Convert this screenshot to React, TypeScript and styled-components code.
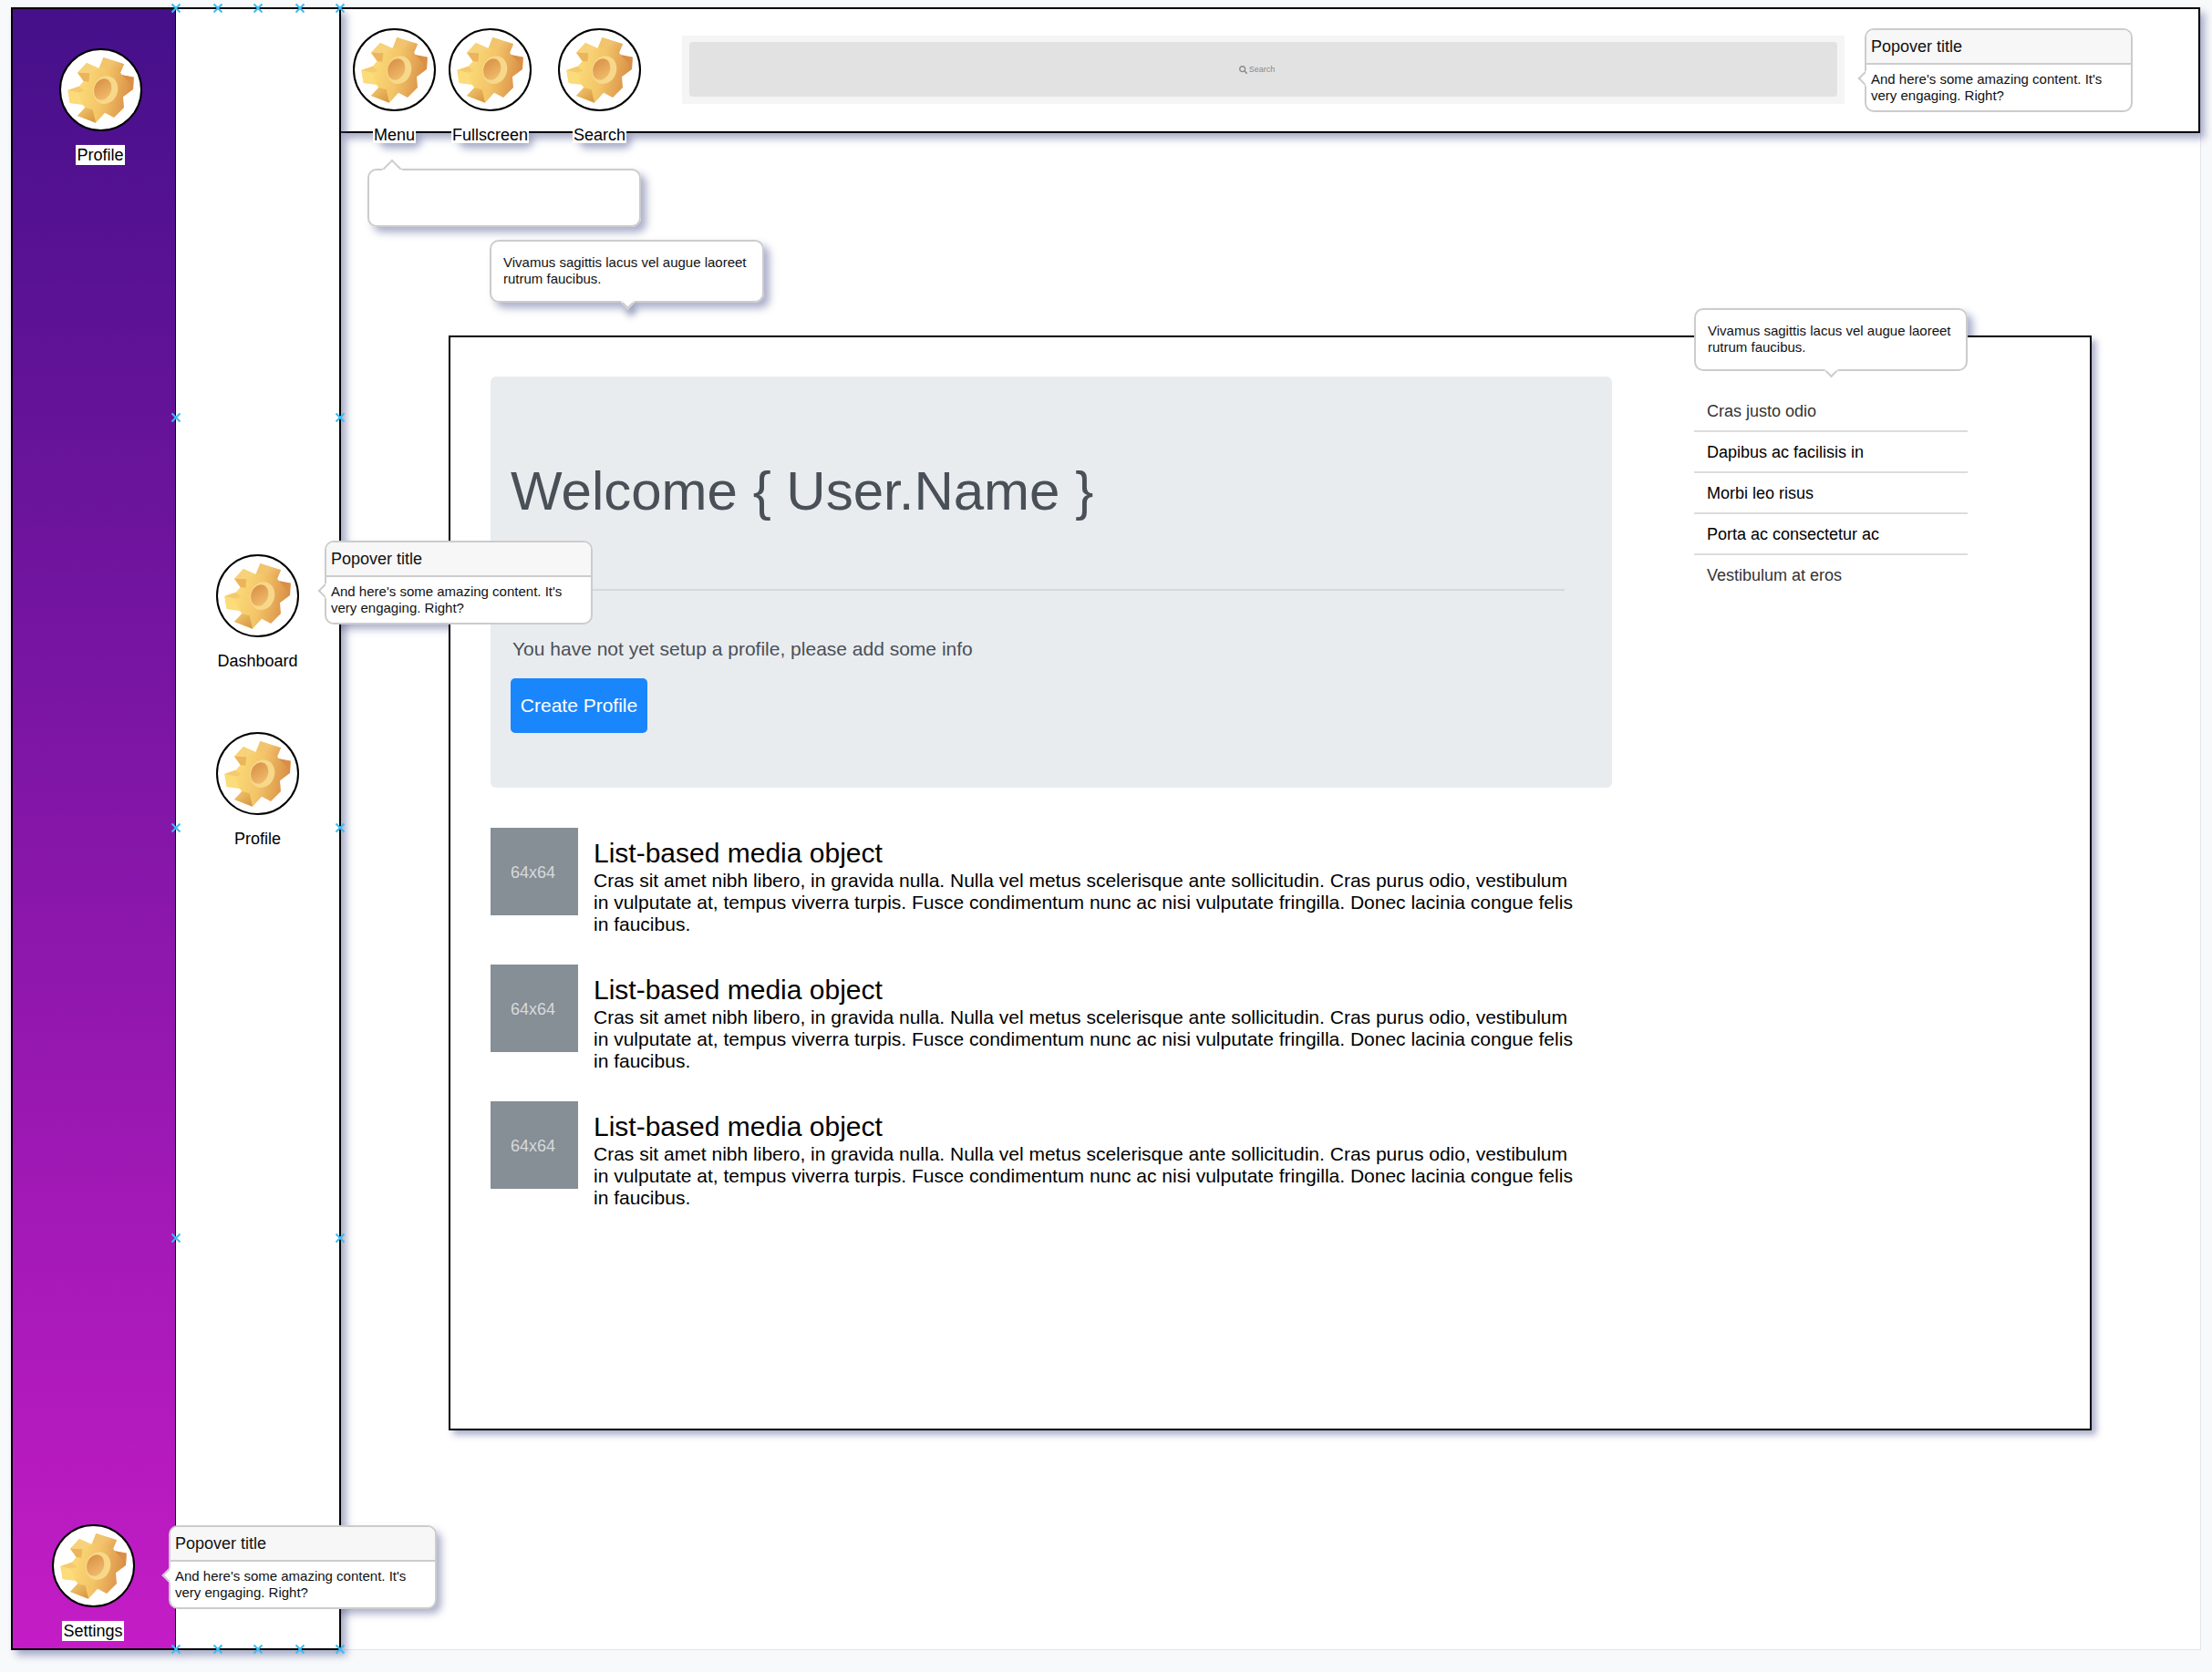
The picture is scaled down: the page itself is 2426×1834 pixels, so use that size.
import React from "react";
import styled, { createGlobalStyle } from "styled-components";
import { FaSearch } from "react-icons/fa";

const FONT = `"Liberation Sans", Arial, sans-serif`;

const GlobalStyle = createGlobalStyle`
  html, body {
    margin: 0;
    padding: 0;
    background: #f8f9fb;
  }
  * {
    box-sizing: border-box;
  }
`;

const Page = styled.div`
  position: relative;
  width: 2426px;
  height: 1834px;
  padding: 8px 12px 24px 12px;
  overflow: hidden;
  font-family: ${FONT};
  color: #000;
`;

const Frame = styled.div`
  display: flex;
  height: 1802px;
`;

const Sidebar = styled.aside`
  position: relative;
  z-index: 3;
  display: flex;
  flex-direction: column;
  justify-content: space-between;
  width: 182px;
  padding: 43px 0 8px;
  border: 2px solid #000;
  background: linear-gradient(180deg, #45108a 0%, #c41cc6 100%);
  box-shadow: 6px 6px 8px rgba(70, 80, 140, 0.45);
`;

const SidePanel = styled.nav`
  position: relative;
  z-index: 3;
  display: flex;
  flex-direction: column;
  align-items: center;
  gap: 67px;
  width: 181px;
  margin-left: -1px;
  padding-top: 598px;
  border: 2px solid #000;
  border-left: 0;
  background: #fff;
  box-shadow: 6px 6px 8px rgba(70, 80, 140, 0.45);
`;

const Main = styled.main`
  display: flex;
  flex: 1;
  flex-direction: column;
  min-width: 0;
  margin-left: -1px;
  background: #fff;
  border-right: 1px solid #e4e5e8;
  border-bottom: 1px solid #e4e5e8;
`;

const Header = styled.header`
  position: relative;
  z-index: 2;
  display: flex;
  flex: none;
  height: 138px;
  padding: 21px 72px 0 14px;
  border: 2px solid #000;
  border-left: 0;
  background: #fff;
  box-shadow: 5px 6px 8px rgba(70, 80, 140, 0.45);
`;

const NavItem = styled.div<{ $gap: number }>`
  display: flex;
  flex: none;
  flex-direction: column;
  align-items: center;
  width: 91px;
  margin-right: ${(p) => p.$gap}px;
`;

const SideItem = styled.div<{ $shift?: number }>`
  display: flex;
  flex-direction: column;
  align-items: center;
  width: 92px;
  margin-left: ${(p) => p.$shift ?? 0}px;
`;

const Circle = styled.div`
  display: flex;
  flex: none;
  align-items: center;
  justify-content: center;
  width: 91px;
  height: 91px;
  border: 2.5px solid #000;
  border-radius: 50%;
  background: #fff;
  overflow: hidden;
`;

const Label = styled.span<{ $boxed?: boolean; $top?: number; $line?: number }>`
  margin-top: ${(p) => p.$top ?? 15}px;
  padding: 0 1px;
  font-size: 18px;
  line-height: ${(p) => p.$line ?? 22}px;
  white-space: nowrap;
  background: ${(p) => (p.$boxed ? "#fff" : "transparent")};
`;

const SearchWrap = styled.div`
  flex: 1;
  height: 75px;
  margin: 8px 0 0 45px;
  padding: 7px 8px 8px;
  background: #f5f5f5;
`;

const SearchBox = styled.div`
  display: flex;
  align-items: center;
  justify-content: center;
  gap: 2px;
  height: 60px;
  padding: 0 14px 0 0;
  border-radius: 4px;
  background: #e2e2e2;
  color: #8a8a8a;
  font-size: 9px;
`;

const PopoverBox = styled.div<{ $x?: number; $y?: number; $over?: boolean }>`
  position: ${(p) => (p.$over ? "absolute" : "relative")};
  left: ${(p) => (p.$over ? `${p.$x}px` : "auto")};
  top: ${(p) => (p.$over ? `${p.$y}px` : "auto")};
  z-index: ${(p) => (p.$over ? 5 : "auto")};
  flex: none;
  width: 294px;
  height: 92px;
  margin-left: ${(p) => (p.$over ? 0 : 22)}px;
  border: 2px solid #ccc;
  border-radius: 10px;
  background: #fff;
`;

const PopoverTitle = styled.div`
  height: 38px;
  padding: 0 5px;
  border-bottom: 2px solid #ccc;
  border-radius: 8px 8px 0 0;
  background: #f7f7f7;
  font-size: 18px;
  line-height: 37px;
  color: #111;
`;

const PopoverBody = styled.div`
  padding: 7px 5px 0;
  font-size: 15px;
  line-height: 18px;
  color: #111;
`;

const Tip = styled.i<{ $side: "left" | "top" | "bottom"; $offset: number; $size: number }>`
  position: absolute;
  display: block;
  width: ${(p) => p.$size}px;
  height: ${(p) => p.$size}px;
  background: #fff;
  border: 2px solid #ccc;
  transform: rotate(45deg);
  ${(p) =>
    p.$side === "left"
      ? `left: -${p.$size / 2 + 1}px; top: ${p.$offset}px; border-top-color: transparent; border-right-color: transparent;`
      : p.$side === "top"
      ? `top: -${p.$size / 2 + 1}px; left: ${p.$offset}px; border-right-color: transparent; border-bottom-color: transparent;`
      : `bottom: -${p.$size / 2 + 1}px; left: ${p.$offset}px; border-top-color: transparent; border-left-color: transparent;`}
`;

const TooltipBox = styled.div<{ $x: number; $y: number; $w: number; $h: number }>`
  position: absolute;
  left: ${(p) => p.$x}px;
  top: ${(p) => p.$y}px;
  z-index: 5;
  width: ${(p) => p.$w}px;
  height: ${(p) => p.$h}px;
  padding: 14px 13px 0;
  border: 2px solid #ccc;
  border-radius: 10px;
  background: #fff;
  font-size: 15px;
  line-height: 18px;
  color: #111;
`;

const Content = styled.section`
  position: relative;
  flex: 1;
  overflow: hidden;
  padding: 222px 0 0 119px;
`;

/* shadows of the floating parts fall under the card, so they live in this layer */
const Shade = styled.div<{ $x: number; $y: number; $w: number; $h: number; $tail?: number }>`
  position: absolute;
  left: ${(p) => p.$x - 373}px;
  top: ${(p) => p.$y - 146}px;
  width: ${(p) => p.$w}px;
  height: ${(p) => p.$h}px;
  border-radius: 10px;
  box-shadow: 6px 6px 8px rgba(70, 80, 140, 0.45);
  ${(p) =>
    p.$tail
      ? `&::after {
          content: "";
          position: absolute;
          left: ${p.$tail}px;
          bottom: -6px;
          width: 11px;
          height: 11px;
          transform: rotate(45deg);
          box-shadow: 8px 3px 7px rgba(70, 80, 140, 0.45);
        }`
      : ""}
`;

const Card = styled.div`
  position: relative;
  z-index: 1;
  display: flex;
  width: 1802px;
  height: 1201px;
  padding: 43px 0 0 44px;
  border: 2px solid #000;
  background: #fff;
  box-shadow: 5px 5px 7px rgba(70, 80, 140, 0.45);
`;

const LeftColumn = styled.div`
  flex: none;
  width: 1230px;
`;

const Jumbotron = styled.div`
  display: flex;
  flex-direction: column;
  align-items: flex-start;
  height: 451px;
  padding: 89px 52px 0 22px;
  border-radius: 6px;
  background: #e9ecef;
`;

const Heading = styled.h1`
  margin: 0;
  font-size: 60px;
  font-weight: 400;
  line-height: 74px;
  color: #495057;
`;

const Divider = styled.hr`
  align-self: stretch;
  margin: 70px 0 0;
  border: 0;
  border-top: 2px solid #d6d9dc;
`;

const Lead = styled.p`
  margin: 50px 0 0 2px;
  font-size: 21px;
  line-height: 28px;
  color: #495057;
`;

const CreateButton = styled.button`
  width: 150px;
  height: 60px;
  margin-top: 18px;
  padding: 0;
  border: 0;
  border-radius: 5px;
  background: #1a86fb;
  color: #fff;
  font-family: ${FONT};
  font-size: 21px;
`;

const MediaList = styled.ul`
  display: flex;
  flex-direction: column;
  gap: 32px;
  margin: 44px 0 0;
  padding: 0;
  list-style: none;
`;

const MediaRow = styled.li`
  display: flex;
  gap: 17px;
`;

const Thumb = styled.div`
  display: flex;
  flex: none;
  align-items: center;
  justify-content: center;
  width: 96px;
  height: 96px;
  padding: 2px 3px 0 0;
  background: #868e96;
  color: #d7dadc;
  font-size: 18px;
`;

const MediaBody = styled.div`
  width: 1090px;
`;

const MediaTitle = styled.h5`
  margin: 10px 0 0;
  font-size: 30px;
  font-weight: 400;
  line-height: 36px;
`;

const MediaText = styled.p`
  margin: 0;
  font-size: 21px;
  line-height: 24px;
`;

const ListGroup = styled.ul`
  flex: none;
  width: 300px;
  margin: 16px 0 0 90px;
  padding: 0;
  list-style: none;
`;

const ListItem = styled.li<{ $muted?: boolean }>`
  height: 45px;
  padding: 0 14px;
  border-bottom: 2px solid #dcdcdc;
  font-size: 18px;
  line-height: 44px;
  color: ${(p) => (p.$muted ? "#333" : "#000")};
  &:last-child {
    border-bottom: 0;
  }
`;

const Marker = styled.svg<{ $x: number; $y: number }>`
  position: absolute;
  left: ${(p) => p.$x - 6}px;
  top: ${(p) => p.$y - 6}px;
  z-index: 6;
  width: 12px;
  height: 12px;
`;

const GearIcon = styled.svg`
  flex: none;
  width: 91px;
  height: 91px;
`;

const Gear = () => (
  <GearIcon viewBox="15 10 273 273" aria-hidden="true">
    <defs>
      <linearGradient id="gearFace" gradientUnits="userSpaceOnUse" x1="60" y1="130" x2="260" y2="170">
        <stop offset="0" stopColor="#fde07a" />
        <stop offset="0.5" stopColor="#f3c468" />
        <stop offset="1" stopColor="#d68a43" />
      </linearGradient>
      <linearGradient id="gearTop" x1="0" y1="0" x2="1" y2="0.6">
        <stop offset="0" stopColor="#f5cb74" />
        <stop offset="1" stopColor="#e5a655" />
      </linearGradient>
      <linearGradient id="gearBottom" x1="0" y1="0" x2="1" y2="1">
        <stop offset="0" stopColor="#f4c96f" />
        <stop offset="1" stopColor="#d4943f" />
      </linearGradient>
      <linearGradient id="gearHole" x1="0" y1="0" x2="1" y2="1">
        <stop offset="0" stopColor="#d68c42" />
        <stop offset="1" stopColor="#f4c271" />
      </linearGradient>
    </defs>
    <polygon
      fill="url(#gearFace)"
      points="160,40 228,62 216,90 222,98 260,105 258,145 225,170 228,205 195,238 165,222 135,255 75,232 100,205 92,195 50,190 43,148 80,135 95,118 75,90 105,58 145,76"
    />
    <polygon fill="#f1c46d" points="160,40 190,50 180,76 150,72" />
    <polygon fill="url(#gearTop)" points="190,50 228,62 216,90 180,76" />
    <polygon fill="#f7d27a" points="105,58 145,76 115,92 75,90" />
    <polygon fill="#ecb45d" points="75,90 115,92 112,120 95,118" />
    <polygon fill="#f5c96f" points="43,148 80,135 98,150 78,156" />
    <polygon fill="#fbdb7a" points="43,148 78,156 92,195 50,190" />
    <polygon fill="url(#gearBottom)" points="75,232 100,205 125,212 135,255" />
    <polygon fill="#da8e46" points="222,98 260,105 258,145 244,122" />
    <ellipse cx="167" cy="147" rx="40" ry="47" fill="#f7d88a" transform="rotate(20 167 147)" />
    <ellipse cx="158" cy="145" rx="28" ry="36" fill="url(#gearHole)" transform="rotate(20 158 145)" />
  </GearIcon>
);

const GearButton = () => (
  <Circle>
    <Gear />
  </Circle>
);

const PopoverContent = () => (
  <>
    <PopoverTitle>Popover title</PopoverTitle>
    <PopoverBody>And here's some amazing content. It's very engaging. Right?</PopoverBody>
  </>
);

const navItems = [
  { label: "Menu", gap: 14 },
  { label: "Fullscreen", gap: 29 },
  { label: "Search", gap: 0 },
];

const listItems = [
  { text: "Cras justo odio", muted: true },
  { text: "Dapibus ac facilisis in" },
  { text: "Morbi leo risus" },
  { text: "Porta ac consectetur ac" },
  { text: "Vestibulum at eros", muted: true },
];

const shades = [
  { x: 356, y: 593, w: 294, h: 91 },
  { x: 185, y: 1673, w: 293, h: 91 },
  { x: 403, y: 185, w: 300, h: 64 },
  { x: 537, y: 263, w: 301, h: 69, tail: 146 },
  { x: 1858, y: 338, w: 300, h: 69 },
  { x: 410, y: 140, w: 46, h: 17 },
  { x: 497, y: 140, w: 82, h: 17 },
  { x: 629, y: 140, w: 58, h: 17 },
];

const markers = [
  ...[193, 239, 283, 329, 373].flatMap((x) => [
    { x, y: 9 },
    { x, y: 1809 },
  ]),
  ...[458, 908, 1358].flatMap((y) => [
    { x: 193, y },
    { x: 373, y },
  ]),
];

const LOREM =
  "Cras sit amet nibh libero, in gravida nulla. Nulla vel metus scelerisque ante sollicitudin. Cras purus odio, vestibulum in vulputate at, tempus viverra turpis. Fusce condimentum nunc ac nisi vulputate fringilla. Donec lacinia congue felis in faucibus.";

const TOOLTIP = "Vivamus sagittis lacus vel augue laoreet rutrum faucibus.";

export default function App() {
  return (
    <Page>
      <GlobalStyle />
      <Frame>
        <Sidebar>
          <SideItem $shift={50}>
            <GearButton />
            <Label $boxed>Profile</Label>
          </SideItem>
          <SideItem $shift={42}>
            <GearButton />
            <Label $boxed>Settings</Label>
          </SideItem>
        </Sidebar>
        <SidePanel>
          <SideItem>
            <GearButton />
            <Label>Dashboard</Label>
          </SideItem>
          <SideItem>
            <GearButton />
            <Label>Profile</Label>
          </SideItem>
        </SidePanel>
        <Main>
          <Header>
            {navItems.map((item) => (
              <NavItem key={item.label} $gap={item.gap}>
                <GearButton />
                <Label $boxed $top={18} $line={17}>
                  {item.label}
                </Label>
              </NavItem>
            ))}
            <SearchWrap>
              <SearchBox>
                <FaSearch size={9} />
                Search
              </SearchBox>
            </SearchWrap>
            <PopoverBox>
              <Tip $side="left" $offset={47} $size={12} />
              <PopoverContent />
            </PopoverBox>
          </Header>
          <Content>
            {shades.map((s) => (
              <Shade key={`${s.x}-${s.y}`} $x={s.x} $y={s.y} $w={s.w} $h={s.h} $tail={s.tail} />
            ))}
            <Card>
              <LeftColumn>
                <Jumbotron>
                  <Heading>Welcome {"{"} User.Name {"}"}</Heading>
                  <Divider />
                  <Lead>You have not yet setup a profile, please add some info</Lead>
                  <CreateButton>Create Profile</CreateButton>
                </Jumbotron>
                <MediaList>
                  {[0, 1, 2].map((i) => (
                    <MediaRow key={i}>
                      <Thumb>64x64</Thumb>
                      <MediaBody>
                        <MediaTitle>List-based media object</MediaTitle>
                        <MediaText>{LOREM}</MediaText>
                      </MediaBody>
                    </MediaRow>
                  ))}
                </MediaList>
              </LeftColumn>
              <ListGroup>
                {listItems.map((item) => (
                  <ListItem key={item.text} $muted={item.muted}>
                    {item.text}
                  </ListItem>
                ))}
              </ListGroup>
            </Card>
          </Content>
        </Main>
      </Frame>

      <PopoverBox $over $x={356} $y={593}>
        <Tip $side="left" $offset={47} $size={12} />
        <PopoverContent />
      </PopoverBox>
      <PopoverBox $over $x={185} $y={1673}>
        <Tip $side="left" $offset={47} $size={12} />
        <PopoverContent />
      </PopoverBox>
      <TooltipBox $x={403} $y={185} $w={300} $h={64}>
        <Tip $side="top" $offset={17} $size={16} />
      </TooltipBox>
      <TooltipBox $x={537} $y={263} $w={301} $h={69}>
        <Tip $side="bottom" $offset={144} $size={11} />
        {TOOLTIP}
      </TooltipBox>
      <TooltipBox $x={1858} $y={338} $w={300} $h={69}>
        <Tip $side="bottom" $offset={143} $size={11} />
        {TOOLTIP}
      </TooltipBox>

      {markers.map((m) => (
        <Marker key={`${m.x}-${m.y}`} $x={m.x} $y={m.y} viewBox="0 0 12 12">
          <path d="M1.5 1.5 L10.5 10.5 M10.5 1.5 L1.5 10.5" stroke="#3bbcf2" strokeWidth="2" fill="none" />
        </Marker>
      ))}
    </Page>
  );
}
